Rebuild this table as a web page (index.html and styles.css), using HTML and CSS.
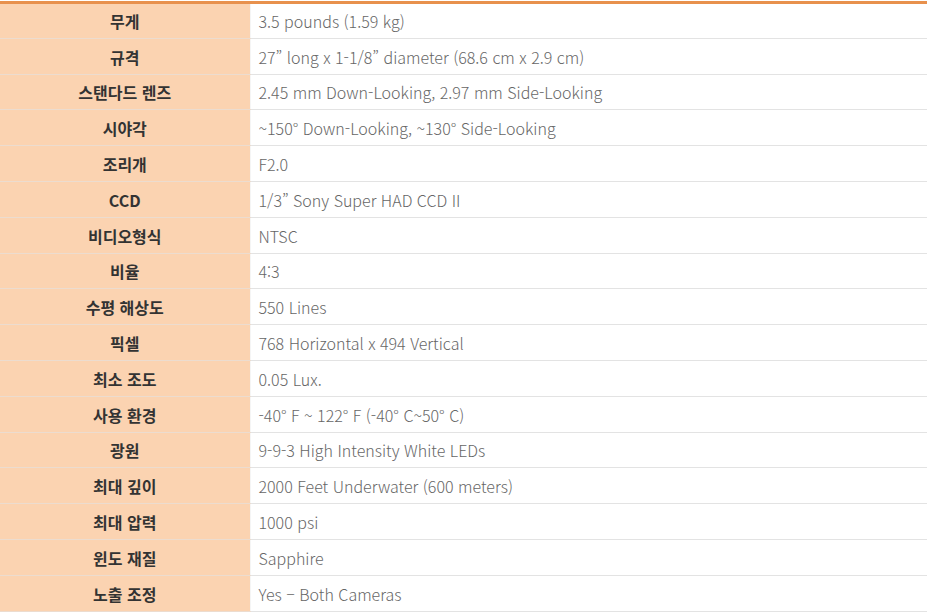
FILE: index.html
```html
<!DOCTYPE html>
<html lang="ko">
<head>
<meta charset="utf-8">
<link rel="stylesheet" href="styles.css">
</head>
<body>
<table class="spec">
<tbody>
<tr><th>무게</th><td>3.5 pounds (1.59 kg)</td></tr>
<tr><th>규격</th><td>27” long x 1-1/8” diameter (68.6 cm x 2.9 cm)</td></tr>
<tr><th>스탠다드 렌즈</th><td>2.45 mm Down-Looking, 2.97 mm Side-Looking</td></tr>
<tr><th>시야각</th><td>~150° Down-Looking, ~130° Side-Looking</td></tr>
<tr><th>조리개</th><td>F2.0</td></tr>
<tr><th>CCD</th><td>1/3” Sony Super HAD CCD II</td></tr>
<tr><th>비디오형식</th><td>NTSC</td></tr>
<tr><th>비율</th><td>4:3</td></tr>
<tr><th>수평 해상도</th><td>550 Lines</td></tr>
<tr><th>픽셀</th><td>768 Horizontal x 494 Vertical</td></tr>
<tr><th>최소 조도</th><td>0.05 Lux.</td></tr>
<tr><th>사용 환경</th><td>-40° F ~ 122° F (-40° C~50° C)</td></tr>
<tr><th>광원</th><td>9-9-3 High Intensity White LEDs</td></tr>
<tr><th>최대 깊이</th><td>2000 Feet Underwater (600 meters)</td></tr>
<tr><th>최대 압력</th><td>1000 psi</td></tr>
<tr><th>윈도 재질</th><td>Sapphire</td></tr>
<tr><th>노출 조정</th><td>Yes – Both Cameras</td></tr>
</tbody>
</table>
</body>
</html>
```
FILE: styles.css
```css
html, body {
  margin: 0;
  padding: 0;
  background: #ffffff;
}
body {
  padding-top: 1px;
}
.spec {
  width: 927px;
  border-collapse: collapse;
  border-top: 3px solid #e8914d;
  font-family: "Noto Sans CJK KR", "Noto Sans", sans-serif;
}
.spec th,
.spec td {
  height: 35.8px;
  padding: 1px 8px 0;
  border-bottom: 1px solid #e3e3e3;
  font-size: 16px;
  line-height: 20px;
  box-sizing: border-box;
}
.spec th {
  width: 250px;
  background: #fbd3b1;
  color: #333333;
  font-weight: 700;
  text-align: center;
  border-right: 1px solid #f5f5f5;
  border-bottom-color: #ecdccf;
}
.spec td {
  color: #666666;
  font-weight: 300;
  text-align: left;
}
```
